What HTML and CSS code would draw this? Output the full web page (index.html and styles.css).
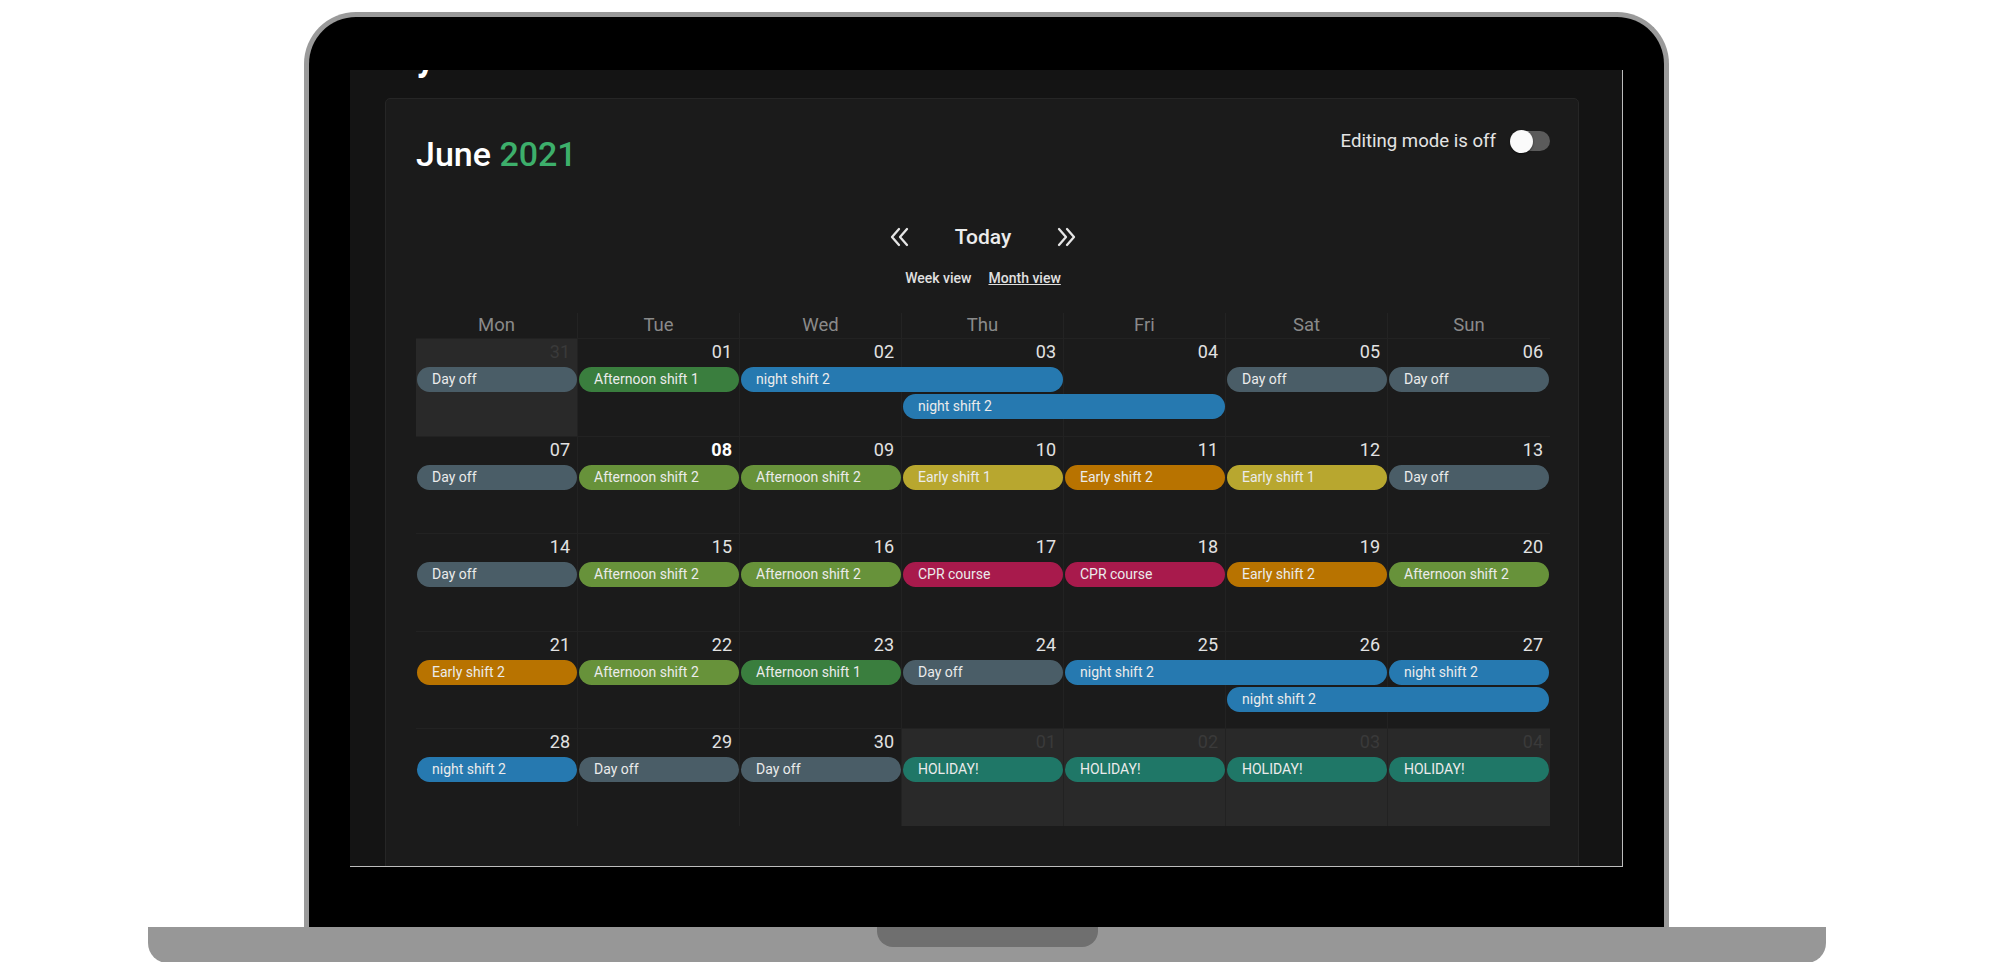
FILE: index.html
```html
<!DOCTYPE html>
<html lang="en">
<head>
<meta charset="utf-8">
<title>Shift calendar</title>
<link rel="stylesheet" href="styles.css">
</head>
<body>
<div class="scene">
  <div class="laptop">
    <div class="screen">
      <h1 class="page-title">My shifts</h1>
      <div class="card">
        <div class="card-head">
          <h2 class="month">June <span class="year">2021</span></h2>
          <div class="edit">
            <span>Editing mode is off</span>
            <span class="toggle"><span class="knob"></span></span>
          </div>
        </div>
        <div class="nav">
          <svg class="chev" width="21" height="20" viewBox="0 0 21 20"><path d="M10 2 L3 10 L10 18 M18 2 L11 10 L18 18" fill="none" stroke="#e6e6e6" stroke-width="2.3" stroke-linecap="round" stroke-linejoin="round"/></svg>
          <span class="today">Today</span>
          <svg class="chev" width="21" height="20" viewBox="0 0 21 20"><path d="M3 2 L10 10 L3 18 M11 2 L18 10 L11 18" fill="none" stroke="#e6e6e6" stroke-width="2.3" stroke-linecap="round" stroke-linejoin="round"/></svg>
        </div>
        <div class="views">
          <span>Week view</span>
          <span class="active">Month view</span>
        </div>
        <div class="dow">
          <div>Mon</div><div>Tue</div><div>Wed</div><div>Thu</div><div>Fri</div><div>Sat</div><div>Sun</div>
        </div>

        <div class="week">
          <div class="day c1 out">31</div>
          <div class="day c2">01</div>
          <div class="day c3">02</div>
          <div class="day c4">03</div>
          <div class="day c5">04</div>
          <div class="day c6">05</div>
          <div class="day c7">06</div>
          <div class="ev off c1">Day off</div>
          <div class="ev aft1 c2">Afternoon shift 1</div>
          <div class="ev night c3 s2">night shift 2</div>
          <div class="ev off c6">Day off</div>
          <div class="ev off c7">Day off</div>
          <div class="ev night c4 s2 l2">night shift 2</div>
        </div>

        <div class="week">
          <div class="day c1">07</div>
          <div class="day c2 cur">08</div>
          <div class="day c3">09</div>
          <div class="day c4">10</div>
          <div class="day c5">11</div>
          <div class="day c6">12</div>
          <div class="day c7">13</div>
          <div class="ev off c1">Day off</div>
          <div class="ev aft2 c2">Afternoon shift 2</div>
          <div class="ev aft2 c3">Afternoon shift 2</div>
          <div class="ev early1 c4">Early shift 1</div>
          <div class="ev early2 c5">Early shift 2</div>
          <div class="ev early1 c6">Early shift 1</div>
          <div class="ev off c7">Day off</div>
        </div>

        <div class="week">
          <div class="day c1">14</div>
          <div class="day c2">15</div>
          <div class="day c3">16</div>
          <div class="day c4">17</div>
          <div class="day c5">18</div>
          <div class="day c6">19</div>
          <div class="day c7">20</div>
          <div class="ev off c1">Day off</div>
          <div class="ev aft2 c2">Afternoon shift 2</div>
          <div class="ev aft2 c3">Afternoon shift 2</div>
          <div class="ev cpr c4">CPR course</div>
          <div class="ev cpr c5">CPR course</div>
          <div class="ev early2 c6">Early shift 2</div>
          <div class="ev aft2 c7">Afternoon shift 2</div>
        </div>

        <div class="week">
          <div class="day c1">21</div>
          <div class="day c2">22</div>
          <div class="day c3">23</div>
          <div class="day c4">24</div>
          <div class="day c5">25</div>
          <div class="day c6">26</div>
          <div class="day c7">27</div>
          <div class="ev early2 c1">Early shift 2</div>
          <div class="ev aft2 c2">Afternoon shift 2</div>
          <div class="ev aft1 c3">Afternoon shift 1</div>
          <div class="ev off c4">Day off</div>
          <div class="ev night c5 s2">night shift 2</div>
          <div class="ev night c7">night shift 2</div>
          <div class="ev night c6 s2 l2">night shift 2</div>
        </div>

        <div class="week">
          <div class="day c1">28</div>
          <div class="day c2">29</div>
          <div class="day c3">30</div>
          <div class="day c4 out">01</div>
          <div class="day c5 out">02</div>
          <div class="day c6 out">03</div>
          <div class="day c7 out">04</div>
          <div class="ev night c1">night shift 2</div>
          <div class="ev off c2">Day off</div>
          <div class="ev off c3">Day off</div>
          <div class="ev hol c4">HOLIDAY!</div>
          <div class="ev hol c5">HOLIDAY!</div>
          <div class="ev hol c6">HOLIDAY!</div>
          <div class="ev hol c7">HOLIDAY!</div>
        </div>
      </div>
    </div>
  </div>
  <div class="base"><div class="notch"></div></div>
</div>
</body>
</html>
```

FILE: styles.css
```css
html, body {
  margin: 0;
  background: #ffffff;
  overflow: hidden;
  font-family: Roboto, "Liberation Sans", sans-serif;
}

.scene {
  width: 1678px;
  padding: 12px 0 0 148px;
}

.laptop {
  box-sizing: border-box;
  width: 1365px;
  height: 915px;
  margin-left: 156px;
  border: 5px solid #9a9a9a;
  border-bottom: 0;
  border-radius: 52px 52px 0 0;
  background: #000;
  padding: 53px 41px 0 41px;
}

.screen {
  box-sizing: border-box;
  height: 797px;
  background: #141414;
  overflow: hidden;
  padding: 0 43px 0 35px;
  border-right: 1px solid #bdbdbd;
  border-bottom: 1px solid #bdbdbd;
}

.page-title {
  margin: -30px 0 22px;
  height: 36px;
  font-size: 36px;
  line-height: 36px;
  font-weight: 700;
  color: #fff;
}

.card {
  background: #1b1b1b;
  border: 1px solid #262626;
  border-radius: 5px;
  padding: 30px 28px 80px 30px;
}

.card-head {
  display: flex;
  justify-content: space-between;
  align-items: flex-start;
  height: 50px;
}

.month {
  margin: 0;
  font-size: 34px;
  line-height: 50px;
  font-weight: 500;
  color: #fff;
}

.month .year {
  color: #3daf6b;
}

.edit {
  display: flex;
  align-items: center;
  gap: 15px;
  height: 24px;
  font-size: 18.6px;
  color: #e4e4e4;
}

.toggle {
  display: flex;
  align-items: center;
  width: 39px;
  height: 20px;
  border-radius: 10px;
  background: #5b5b5b;
}

.knob {
  width: 23px;
  height: 23px;
  margin-left: -1px;
  border-radius: 50%;
  background: #fafafa;
  box-shadow: 0 1px 2px rgba(0, 0, 0, 0.5);
}

.nav {
  margin-top: 43px;
  height: 30px;
  display: flex;
  justify-content: center;
  align-items: center;
  gap: 45px;
}

.today {
  font-size: 21px;
  line-height: 30px;
  font-weight: 500;
  color: #ececec;
}

.chev {
  display: block;
}

.views {
  margin-top: 16px;
  display: flex;
  justify-content: center;
  gap: 17px;
  font-size: 14px;
  line-height: 20px;
  font-weight: 500;
  color: #e0e0e0;
}

.views .active {
  text-decoration: underline;
}

.dow {
  margin-top: 25px;
  display: grid;
  grid-template-columns: repeat(7, 1fr);
}

.dow div {
  height: 25px;
  line-height: 25px;
  text-align: center;
  font-size: 18.5px;
  color: #8a8a8a;
  border-right: 1px solid #232323;
}

.dow div:last-child {
  border-right: 0;
}

.week {
  box-sizing: border-box;
  display: grid;
  grid-template-columns: repeat(7, 1fr);
  grid-template-rows: 28px 27px 27px 1fr;
  height: 97.5px;
  border-top: 1px solid #222;
}

.day {
  grid-row: 1 / -1;
  border-right: 1px solid #222;
  text-align: right;
  padding: 2px 7px 0 0;
  font-size: 18px;
  line-height: 22px;
  color: #e2e2e2;
}

.day.c7 {
  border-right: 0;
}

.day.out {
  background: #292929;
  color: #3a3a3a;
}

.day.cur {
  font-weight: 700;
  color: #fff;
}

.c1 { grid-column-start: 1; }
.c2 { grid-column-start: 2; }
.c3 { grid-column-start: 3; }
.c4 { grid-column-start: 4; }
.c5 { grid-column-start: 5; }
.c6 { grid-column-start: 6; }
.c7 { grid-column-start: 7; }
.s2 { grid-column-end: span 2; }

.ev {
  grid-row: 2;
  margin: 0 1px;
  height: 25px;
  border-radius: 13px;
  padding-left: 15px;
  font-size: 14px;
  line-height: 25px;
  color: #ebebeb;
  white-space: nowrap;
  overflow: hidden;
}

.ev.l2 {
  grid-row: 3;
}

.off { background: #4a5d67; }
.aft1 { background: #3a7e3e; }
.aft2 { background: #67923a; }
.night { background: #2679b0; }
.early1 { background: #b8a72f; }
.early2 { background: #b87300; }
.cpr { background: #a81a4c; }
.hol { background: #1f7767; }

.base {
  width: 1678px;
  height: 36px;
  background: #979797;
  border-radius: 0 0 20px 20px;
  display: flex;
  justify-content: center;
}

.notch {
  width: 221px;
  height: 20px;
  background: #6f6f6f;
  border-radius: 0 0 16px 16px;
}
```
